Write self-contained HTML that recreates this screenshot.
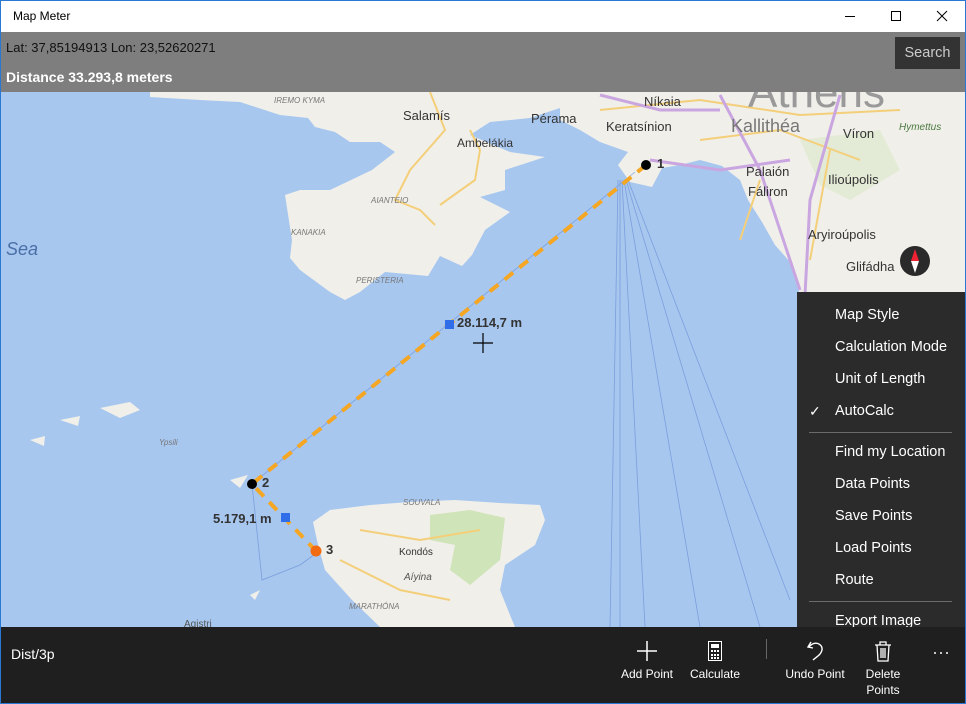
<!DOCTYPE html>
<html><head><meta charset="utf-8"><style>
*{margin:0;padding:0;box-sizing:border-box}
body{width:966px;height:704px;overflow:hidden;font-family:"Liberation Sans",sans-serif;background:#fff;position:relative}
#win{position:absolute;left:0;top:0;width:966px;height:704px;border:1px solid #2b78d4}
#title{position:absolute;left:0;top:0;width:966px;height:32px;background:#fff}
#title span{position:absolute;left:13px;top:9px;font-size:12px;color:#000}
#map{position:absolute;left:1px;top:32px;width:964px;height:595px;overflow:hidden;background:#a7c7ef}
#band{position:absolute;left:1px;top:32px;width:964px;height:60px;background:#7e7e7e}
.t{position:absolute;white-space:nowrap}
#menu{position:absolute;left:797px;top:292px;width:169px;height:335px;background:#2b2b2b;color:#fff;font-size:14.5px}
#menu div{position:absolute;left:38px}
#menu .sep{left:12px;width:143px;height:1px;background:#6a6a6a}
#bar{position:absolute;left:1px;top:627px;width:964px;height:76px;background:#1f1f1f;color:#fff;font-size:12px}
.btn{position:absolute;text-align:center;width:70px;font-size:12px;line-height:16px}
</style></head><body>
<div id="title"><span>Map Meter</span>
<svg style="position:absolute;left:840px;top:8px" width="110" height="16"><line x1="5" y1="8.5" x2="15" y2="8.5" stroke="#000"/><rect x="51.5" y="3.5" width="9" height="9" fill="none" stroke="#000"/><path d="M97 3L107 13M107 3L97 13" stroke="#000"/></svg></div>
<div id="map">
<svg width="964" height="595" viewBox="1 32 964 595" style="position:absolute;left:0;top:0">
<g fill="#f1efea">
<path d="M0,60 L150,60 L150,68 L100,75 L60,70 L0,72Z"/>
<path d="M150,60 L560,60 L560,108 L530,118 L490,122 L470,135 L510,152 L545,157 L505,170 L505,190 L480,197 L510,212 L485,230 L472,255 L462,266 L440,256 L428,276 L385,272 L360,292 L345,300 L330,292 L300,270 L290,258 L292,240 L285,195 L300,190 L330,190 L372,170 L395,152 L380,142 L350,142 L335,132 L315,127 L308,118 L280,115 L240,102 L200,100 L150,97Z"/>
<path d="M560,60 L966,60 L966,300 L800,295 L790,262 L775,245 L762,222 L748,200 L740,180 L722,166 L700,160 L680,165 L662,168 L652,187 L630,182 L618,165 L628,152 L600,142 L580,130 L560,120Z"/>
<path d="M313,522 L330,510 L370,505 L410,502 L455,500 L500,503 L540,505 L545,520 L535,545 L505,565 L500,590 L510,615 L515,627 L380,627 L352,600 L325,570 L318,545Z"/>
<path d="M100,408 L130,402 L140,410 L120,418Z"/><path d="M60,420 L80,416 L78,426Z"/><path d="M30,440 L45,436 L44,446Z"/>
<path d="M230,480 L248,475 L240,488Z"/><path d="M250,595 L260,590 L255,600Z"/>
</g>
<g fill="#cfe4b8"><path d="M430,515 L470,510 L505,518 L500,560 L470,585 L450,570 L455,545 L430,540Z"/><path d="M800,140 L880,130 L900,170 L850,200 L820,185Z" opacity=".4"/></g>
<g stroke="#f4cf7a" stroke-width="2" fill="none"><path d="M430,92 L445,130 L410,170 L395,200 L420,210 L435,225"/><path d="M470,130 L480,150 L475,180 L440,205"/><path d="M360,530 L420,540 L480,530 M340,560 L400,590 L450,600"/><path d="M600,110 L700,100 L800,115 L900,110 M700,140 L780,130 L860,160 M760,180 L740,240 M830,150 L810,260"/></g>
<g stroke="#c9a6e0" stroke-width="3" fill="none"><path d="M600,95 L660,110 L720,110 M650,160 L720,170 L790,160 M720,95 L760,170 L800,290 M840,95 L810,200 L805,295"/></g>
<g stroke="#6f95d8" stroke-width="0.8" fill="none" opacity=".8"><path d="M635,172 L252,484 L262,580 L300,565 L318,552"/><path d="M620,180 L620,627 M622,180 L645,627 M624,180 L700,627 M626,180 L760,627 M628,180 L790,600 M618,180 L610,627"/></g>
<path d="M646,165 L252,484 L316,551" stroke="#f5a623" stroke-width="4" stroke-dasharray="11,8" fill="none"/>
<circle cx="646" cy="165" r="5" fill="#000"/><circle cx="252" cy="484" r="5" fill="#000"/><circle cx="316" cy="551" r="5.5" fill="#f26b10"/>
<rect x="445" y="320" width="9" height="9" fill="#2f6ee8"/><rect x="281" y="513" width="9" height="9" fill="#2f6ee8"/>
<path d="M483,333 V353 M473,343 H493" stroke="#000" stroke-width="1.2"/>
<circle cx="915" cy="261" r="15" fill="#2a2a2a"/><path d="M915,249 L911,261 H919Z" fill="#e23"/><path d="M915,273 L911,261 H919Z" fill="#fff"/>
</svg>
<div class="t" style="left:456px;top:283px;font-size:13px;font-weight:bold;color:#333">28.114,7 m</div>
<div class="t" style="left:212px;top:479px;font-size:13px;font-weight:bold;color:#333">5.179,1 m</div>
<div class="t" style="left:656px;top:124px;font-size:13px;font-weight:bold;color:#333">1</div>
<div class="t" style="left:261px;top:443px;font-size:13px;font-weight:bold;color:#333">2</div>
<div class="t" style="left:325px;top:510px;font-size:13px;font-weight:bold;color:#333">3</div>
<div class="t" style="left:402px;top:76px;font-size:13px;color:#333">Salamís</div>
<div class="t" style="left:530px;top:79px;font-size:13px;color:#333">Pérama</div>
<div class="t" style="left:643px;top:62px;font-size:13px;color:#333">Níkaia</div>
<div class="t" style="left:605px;top:87px;font-size:13px;color:#333">Keratsínion</div>
<div class="t" style="left:456px;top:104px;font-size:12px;color:#333">Ambelákia</div>
<div class="t" style="left:730px;top:84px;font-size:18px;color:#777">Kallithéa</div>
<div class="t" style="left:747px;top:36px;font-size:44px;color:#999">Athens</div>
<div class="t" style="left:842px;top:94px;font-size:13px;color:#333">Víron</div>
<div class="t" style="left:898px;top:90px;font-size:10px;font-style:italic;color:#4a7a40">Hymettus</div>
<div class="t" style="left:745px;top:132px;font-size:13px;color:#333">Palaión</div>
<div class="t" style="left:747px;top:152px;font-size:13px;color:#333">Fáliron</div>
<div class="t" style="left:827px;top:140px;font-size:13px;color:#333">Ilioúpolis</div>
<div class="t" style="left:807px;top:195px;font-size:13px;color:#333">Aryiroúpolis</div>
<div class="t" style="left:845px;top:227px;font-size:13px;color:#333">Glifádha</div>
<div class="t" style="left:5px;top:207px;font-size:18px;font-style:italic;color:#4a6fa8">Sea</div>
<div class="t" style="left:273px;top:64px;font-size:8px;font-style:italic;color:#777">IREMO KYMA</div>
<div class="t" style="left:370px;top:164px;font-size:8px;font-style:italic;color:#777">AIANTEIO</div>
<div class="t" style="left:290px;top:196px;font-size:8px;font-style:italic;color:#777">KANAKIA</div>
<div class="t" style="left:355px;top:244px;font-size:8px;font-style:italic;color:#777">PERISTERIA</div>
<div class="t" style="left:158px;top:406px;font-size:8px;font-style:italic;color:#777">Ypsili</div>
<div class="t" style="left:402px;top:466px;font-size:8px;font-style:italic;color:#777">SOUVALA</div>
<div class="t" style="left:398px;top:515px;font-size:10px;color:#333">Kondós</div>
<div class="t" style="left:403px;top:540px;font-size:10px;font-style:italic;color:#555">Aíyina</div>
<div class="t" style="left:348px;top:570px;font-size:8px;font-style:italic;color:#777">MARATHÓNA</div>
<div class="t" style="left:183px;top:587px;font-size:10px;color:#555">Agistri</div>
</div>
<div id="band"></div>
<div class="t" style="left:6px;top:40px;font-size:13px;color:#111">Lat: 37,85194913 Lon: 23,52620271</div>
<div class="t" style="left:6px;top:69px;font-size:14px;font-weight:bold;color:#fff">Distance 33.293,8 meters</div>
<div style="position:absolute;left:895px;top:37px;width:65px;height:32px;background:#333;color:#ccc;font-size:14.5px;text-align:center;line-height:32px">Search</div>
<div id="menu">
<div style="top:15px">Map Style</div>
<div style="top:47px">Calculation Mode</div>
<div style="top:79px">Unit of Length</div>
<div style="top:111px">AutoCalc</div>
<span style="position:absolute;left:12px;top:111px;font-size:14px">✓</span>
<div class="sep" style="top:140px"></div>
<div style="top:152px">Find my Location</div>
<div style="top:184px">Data Points</div>
<div style="top:216px">Save Points</div>
<div style="top:248px">Load Points</div>
<div style="top:280px">Route</div>
<div class="sep" style="top:309px"></div>
<div style="top:321px">Export Image</div>
</div>
<div id="bar">
<div class="t" style="left:10px;top:19px;font-size:14px">Dist/3p</div>
<svg style="position:absolute;left:0;top:0" width="964" height="76">
<path d="M646,14 V34 M636,24 H656" stroke="#fff" stroke-width="1.5"/>
<rect x="707.5" y="14.5" width="13" height="19" fill="none" stroke="#fff"/><rect x="710" y="17" width="8" height="4" fill="#fff"/><g fill="#fff"><rect x="710" y="23" width="2" height="2"/><rect x="713" y="23" width="2" height="2"/><rect x="716" y="23" width="2" height="2"/><rect x="710" y="27" width="2" height="2"/><rect x="713" y="27" width="2" height="2"/><rect x="716" y="27" width="2" height="2"/><rect x="710" y="30" width="2" height="2"/><rect x="713" y="30" width="2" height="2"/><rect x="716" y="30" width="2" height="2"/></g>
<line x1="765.5" y1="12" x2="765.5" y2="32" stroke="#666"/>
<path d="M810,15 L807,20 L812,21 M808,20 C814,13 822,17 821,23 C820,28 815,30 812,33" stroke="#fff" stroke-width="1.4" fill="none"/>
<path d="M874,18 H890 M879,18 V15 H885 V18 M876,18 L877,34 H887 L888,18 M880,21 V31 M882,21 V31 M884,21 V31" stroke="#fff" stroke-width="1.3" fill="none"/>
<g fill="#fff"><circle cx="934" cy="26" r="1"/><circle cx="940" cy="26" r="1"/><circle cx="946" cy="26" r="1"/></g>
</svg>
<div class="btn" style="left:611px;top:39px">Add Point</div>
<div class="btn" style="left:679px;top:39px">Calculate</div>
<div class="btn" style="left:779px;top:39px">Undo Point</div>
<div class="btn" style="left:847px;top:39px">Delete<br>Points</div>
</div>
<div id="win"></div>
</body></html>
